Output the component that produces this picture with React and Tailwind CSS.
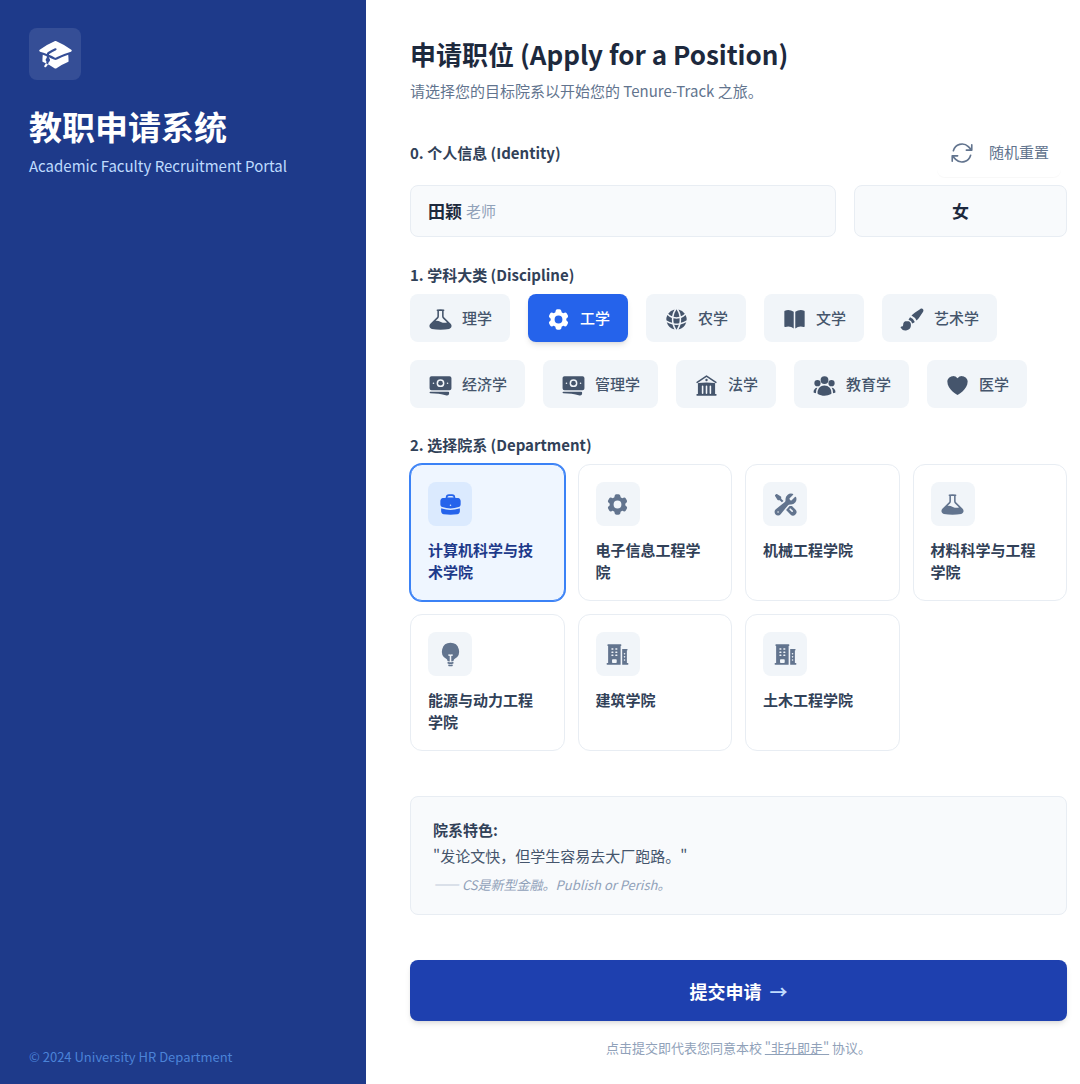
import { useState } from 'react'
import {
  HiAcademicCap,
  HiBanknotes,
  HiBeaker,
  HiBookOpen,
  HiBriefcase,
  HiBuildingLibrary,
  HiBuildingOffice2,
  HiCog6Tooth,
  HiGlobeAlt,
  HiHeart,
  HiLightBulb,
  HiOutlineArrowPath,
  HiPaintBrush,
  HiUserGroup,
  HiWrenchScrewdriver,
} from 'react-icons/hi2'

const disciplines = [
  { id: 'science', name: '理学', icon: HiBeaker },
  { id: 'engineering', name: '工学', icon: HiCog6Tooth },
  { id: 'agriculture', name: '农学', icon: HiGlobeAlt },
  { id: 'literature', name: '文学', icon: HiBookOpen },
  { id: 'arts', name: '艺术学', icon: HiPaintBrush },
  { id: 'economics', name: '经济学', icon: HiBanknotes },
  { id: 'management', name: '管理学', icon: HiBanknotes },
  { id: 'law', name: '法学', icon: HiBuildingLibrary },
  { id: 'education', name: '教育学', icon: HiUserGroup },
  { id: 'medicine', name: '医学', icon: HiHeart },
]

const departments = [
  { id: 'cs', name: '计算机科学与技术学院', icon: HiBriefcase },
  { id: 'ee', name: '电子信息工程学院', icon: HiCog6Tooth },
  { id: 'me', name: '机械工程学院', icon: HiWrenchScrewdriver },
  { id: 'mse', name: '材料科学与工程学院', icon: HiBeaker },
  { id: 'energy', name: '能源与动力工程学院', icon: HiLightBulb },
  { id: 'arch', name: '建筑学院', icon: HiBuildingOffice2 },
  { id: 'civil', name: '土木工程学院', icon: HiBuildingOffice2 },
]

function DisciplineButton({ item, active, onClick }) {
  const Icon = item.icon
  return (
    <button
      type="button"
      aria-pressed={active}
      onClick={onClick}
      className={`flex h-12 items-center gap-[9px] rounded-lg px-[18px] text-[15px] font-medium ${
        active ? 'bg-[#2563eb] text-white shadow-md' : 'bg-slate-100 text-slate-600'
      }`}
    >
      <Icon className="mt-[3px] size-[25px]" />
      {item.name}
    </button>
  )
}

function DepartmentCard({ item, active, onClick }) {
  const Icon = item.icon
  return (
    <button
      type="button"
      aria-pressed={active}
      onClick={onClick}
      className={`flex flex-col items-start rounded-xl border p-[17px] text-left ${
        active ? 'border-[#3b82f6] bg-[#eff6ff] ring-1 ring-[#3b82f6]' : 'border-[#e8edf3] bg-white'
      }`}
    >
      <span
        className={`mb-[13px] flex size-11 items-center justify-center rounded-lg ${
          active ? 'bg-[#dbeafe] text-[#2563eb]' : 'bg-slate-100 text-slate-500'
        }`}
      >
        <Icon className="size-[25px]" />
      </span>
      <span className={`text-[15px] leading-[22px] font-bold ${active ? 'text-[#1e3a8a]' : 'text-slate-700'}`}>
        {item.name}
      </span>
    </button>
  )
}

export default function App() {
  const [discipline, setDiscipline] = useState('engineering')
  const [department, setDepartment] = useState('cs')

  return (
    <div lang="zh-CN" className="flex min-h-screen bg-white font-['Noto_Sans_CJK_SC',sans-serif]">
      {/* Sidebar */}
      <aside className="flex w-[366px] shrink-0 flex-col justify-between bg-[#1e3a8a] px-[29px] pt-7 pb-4">
        <div>
          <div className="flex size-[52px] items-center justify-center rounded-lg bg-white/10 text-white">
            <HiAcademicCap className="size-[35px]" />
          </div>
          <h1 className="mt-[26px] text-[33px] leading-10 font-bold text-white">教职申请系统</h1>
          <p className="mt-2 text-[15px] leading-6 text-[#bfdbfe]">Academic Faculty Recruitment Portal</p>
        </div>
        <p className="text-[13px] leading-[22px] text-[#60a5fa]/70">© 2024 University HR Department</p>
      </aside>

      {/* Form */}
      <main className="min-w-0 flex-1 pt-[34px] pr-[13px] pb-6 pl-11">
        <h2 className="text-[26px] leading-10 font-bold text-slate-800">申请职位 (Apply for a Position)</h2>
        <p className="mt-[5px] text-[15px] leading-6 text-slate-500">请选择您的目标院系以开始您的 Tenure-Track 之旅。</p>

        <section className="mt-[25px]">
          <div className="flex h-[49px] items-center justify-between">
            <h3 className="text-[15px] leading-6 font-bold text-slate-700">0. 个人信息 (Identity)</h3>
            <button
              type="button"
              className="mr-1.5 flex h-[49px] items-center gap-3.5 rounded-lg px-3 text-[15px] text-slate-500 shadow-[0_1px_1px_rgba(0,0,0,0.03)]"
            >
              <HiOutlineArrowPath className="size-[26px]" />
              随机重置
            </button>
          </div>
          <div className="mt-2 grid grid-cols-[2fr_1fr] gap-[18px]">
            <div className="flex h-[52px] items-center gap-1 rounded-lg border border-[#e8edf3] bg-slate-50 px-[17px]">
              <span className="text-[17px] font-bold text-slate-800">田颖</span>
              <span className="text-[15px] text-slate-400">老师</span>
            </div>
            <div className="flex h-[52px] items-center justify-center rounded-lg border border-[#e8edf3] bg-slate-50 text-[17px] font-bold text-slate-800">
              女
            </div>
          </div>
        </section>

        <section className="mt-[26px]">
          <h3 className="text-[15px] leading-6 font-bold text-slate-700">1. 学科大类 (Discipline)</h3>
          <div className="mt-[7px] flex flex-wrap gap-[18px]">
            {disciplines.map((d) => (
              <DisciplineButton key={d.id} item={d} active={d.id === discipline} onClick={() => setDiscipline(d.id)} />
            ))}
          </div>
        </section>

        <section className="mt-[25px]">
          <h3 className="text-[15px] leading-6 font-bold text-slate-700">2. 选择院系 (Department)</h3>
          <div className="mt-[7px] grid grid-cols-4 gap-[13px]">
            {departments.map((d) => (
              <DepartmentCard key={d.id} item={d} active={d.id === department} onClick={() => setDepartment(d.id)} />
            ))}
          </div>
        </section>

        {/* Department notes */}
        <div className="mt-[45px] rounded-lg border border-[#e8edf3] bg-slate-50 px-[22px] pt-5 pb-[19px] text-[15px] leading-[26px] text-slate-600">
          <p className="font-bold text-slate-700">院系特色:</p>
          <p>"发论文快，但学生容易去大厂跑路。"</p>
          <p className="mt-1.5 text-[13px] leading-5 text-slate-400 italic">—— CS是新型金融。Publish or Perish。</p>
        </div>

        <button
          type="button"
          className="mt-[45px] flex h-[61px] w-full items-center justify-center gap-2 rounded-lg bg-[#1e40af] text-lg font-bold text-white shadow-md"
        >
          提交申请
          <span className="text-[#bfdbfe]">→</span>
        </button>
        <p className="mt-4 text-center text-[13px] leading-[22px] text-slate-400">
          点击提交即代表您同意本校{' '}
          <a href="#tenure" className="underline">
            "非升即走"
          </a>{' '}
          协议。
        </p>
      </main>
    </div>
  )
}
